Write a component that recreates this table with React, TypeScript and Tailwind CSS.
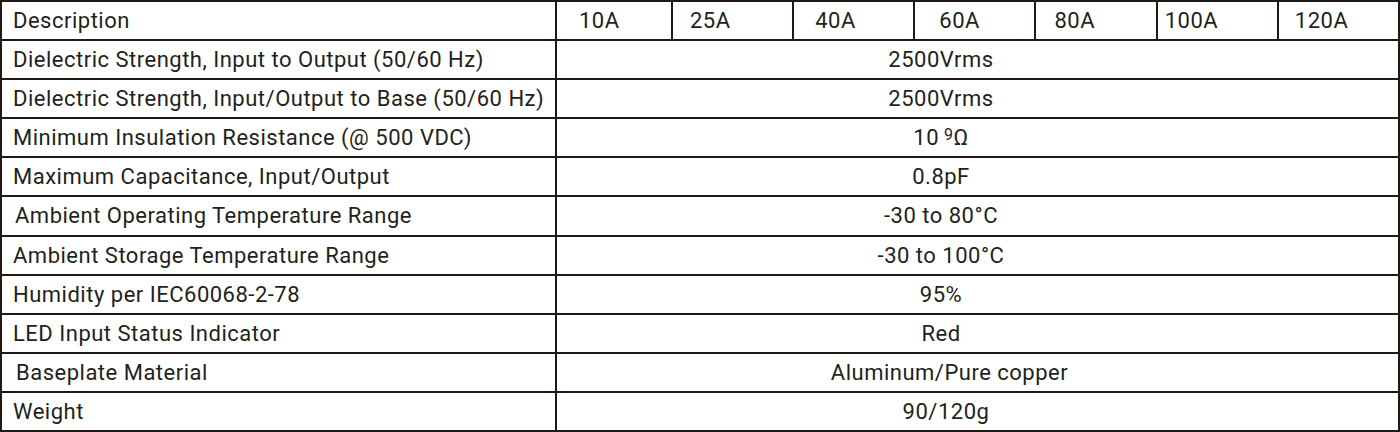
import React from 'react';

const headers = [
  { label: '10A', pad: 'pl-[22px]' },
  { label: '25A', pad: 'pl-[17px]' },
  { label: '40A', pad: 'pl-[21px]' },
  { label: '60A', pad: 'pl-[24px]' },
  { label: '80A', pad: 'pl-[18px]' },
  { label: '100A', pad: 'pl-[7px]' },
  { label: '120A', pad: 'pl-[16px]' },
];

const rows: { name: string; value: React.ReactNode; pad?: string; shift?: string }[] = [
  { name: 'Dielectric Strength, Input to Output (50/60 Hz)', value: '2500Vrms' },
  { name: 'Dielectric Strength, Input/Output to Base (50/60 Hz)', value: '2500Vrms' },
  {
    name: 'Minimum Insulation Resistance (@ 500 VDC)',
    value: (
      <>
        10<sup className="ml-[5px] text-[16px] relative -top-[3px]">9</sup>Ω
      </>
    ),
  },
  { name: 'Maximum Capacitance, Input/Output', value: '0.8pF' },
  { name: 'Ambient Operating Temperature Range', value: '-30 to 80°C', pad: 'pl-[13px]' },
  { name: 'Ambient Storage Temperature Range', value: '-30 to 100°C' },
  { name: 'Humidity per IEC60068-2-78', value: '95%' },
  { name: 'LED Input Status Indicator', value: 'Red' },
  { name: 'Baseplate Material', value: 'Aluminum/Pure copper', pad: 'pl-[14px]', shift: 'pr-[56px]' },
  { name: 'Weight', value: '90/120g', shift: 'pr-[63px]' },
];

const cell = 'flex items-center border-r-2 border-b-2 border-[#231815]';

export default function App() {
  return (
    <div className="w-[1400px] h-[432px] bg-white text-[#231f20] font-['Roboto',sans-serif] text-[22px] tracking-[0.5px]">
      <div className="grid h-full grid-cols-[555px_116px_repeat(6,1fr)] grid-rows-[repeat(11,1fr)] border-l-2 border-t-2 border-[#231815]">
        <div className={`${cell} pl-[11px]`}>Description</div>
        {headers.map((h) => (
          <div key={h.label} className={`${cell} ${h.pad}`}>
            {h.label}
          </div>
        ))}
        {rows.map((r) => (
          <React.Fragment key={r.name}>
            <div className={`${cell} ${r.pad ?? 'pl-[11px]'} whitespace-nowrap`}>{r.name}</div>
            <div className={`${cell} col-span-7 justify-center ${r.shift ?? 'pr-[73px]'}`}>{r.value}</div>
          </React.Fragment>
        ))}
      </div>
    </div>
  );
}
